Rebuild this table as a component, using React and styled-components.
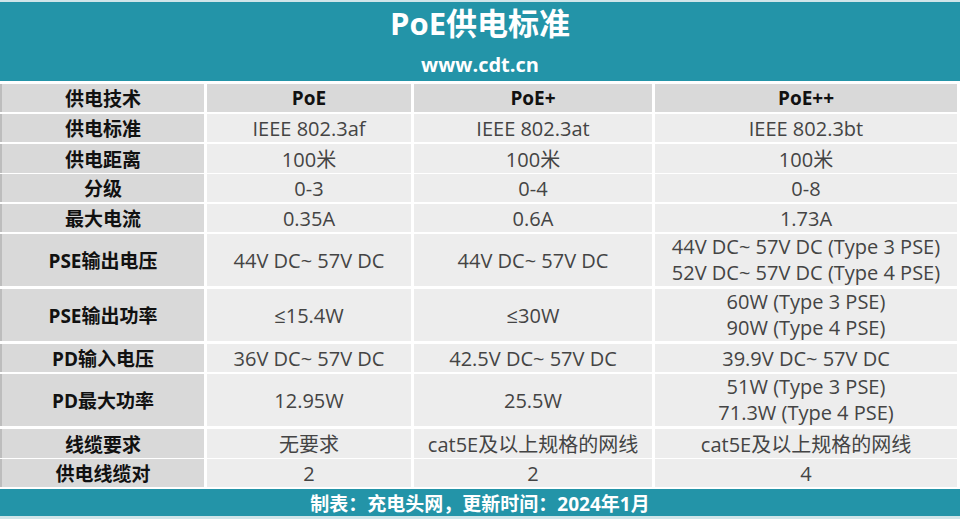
import React from "react";
import styled, { createGlobalStyle } from "styled-components";

const rows = [
  ["供电标准", "IEEE 802.3af", "IEEE 802.3at", "IEEE 802.3bt"],
  ["供电距离", "100米", "100米", "100米"],
  ["分级", "0-3", "0-4", "0-8"],
  ["最大电流", "0.35A", "0.6A", "1.73A"],
  [
    "PSE输出电压",
    "44V DC~ 57V DC",
    "44V DC~ 57V DC",
    ["44V DC~ 57V DC (Type 3 PSE)", "52V DC~ 57V DC (Type 4 PSE)"],
  ],
  ["PSE输出功率", "≤15.4W", "≤30W", ["60W (Type 3 PSE)", "90W (Type 4 PSE)"]],
  ["PD输入电压", "36V DC~ 57V DC", "42.5V DC~ 57V DC", "39.9V DC~ 57V DC"],
  ["PD最大功率", "12.95W", "25.5W", ["51W (Type 3 PSE)", "71.3W (Type 4 PSE)"]],
  ["线缆要求", "无要求", "cat5E及以上规格的网线", "cat5E及以上规格的网线"],
  ["供电线缆对", "2", "2", "4"],
];

const App = () => {
  return (
    <>
      <GlobalStyle />
      <Page>
        <Banner>
          <Title>PoE供电标准</Title>
          <Site>www.cdt.cn</Site>
        </Banner>
        <Table>
          <Row>
            <Head>供电技术</Head>
            <Head>PoE</Head>
            <Head>PoE+</Head>
            <Head>PoE++</Head>
          </Row>
          {rows.map(([label, ...cells]) => {
            const tall = cells.some((c) => Array.isArray(c));
            return (
              <Row key={label} $tall={tall}>
                <Head>{label}</Head>
                {cells.map((c, i) => (
                  <Cell key={i}>
                    {Array.isArray(c)
                      ? c.map((line) => <Line key={line}>{line}</Line>)
                      : c}
                  </Cell>
                ))}
              </Row>
            );
          })}
        </Table>
        <Footer>制表：充电头网，更新时间：2024年1月</Footer>
      </Page>
    </>
  );
};

export default App;

const GlobalStyle = createGlobalStyle`
  body {
    margin: 0;
    background: #ffffff;
    font-family: "Open Sans", "Noto Sans CJK SC", sans-serif;
  }
`;

const Page = styled.div`
  width: 960px;
  height: 519px;
  display: flex;
  flex-direction: column;
  gap: 3px;
  background: #ffffff;
  border-bottom: 3px solid #cfe5e9;
  box-sizing: border-box;
`;

const Banner = styled.div`
  height: 81px;
  box-sizing: border-box;
  border-top: 2px solid #cfe5e9;
  background: #2394a8;
  color: #ffffff;
  display: flex;
  flex-direction: column;
  align-items: center;
  font-weight: 700;
`;

const Title = styled.div`
  font-size: 31px;
  line-height: 40px;
  margin-top: 1px;
`;

const Site = styled.div`
  font-size: 20px;
  line-height: 24px;
  margin-top: 10px;
`;

const Table = styled.div`
  display: flex;
  flex-direction: column;
  gap: 3px;
`;

const Row = styled.div`
  display: grid;
  grid-template-columns: 204px 204px 238px 302px;
  column-gap: 3px;
  height: ${({ $tall }) => ($tall ? "52px" : "27px")};
`;

const Head = styled.div`
  background: #d9d9d9;
  display: flex;
  align-items: center;
  justify-content: center;
  font-size: 19px;
  font-weight: 700;
  color: #111111;
  &:first-child {
    border-left: 2px solid #bdbdbd;
  }
`;

const Cell = styled.div`
  background: #ededed;
  display: flex;
  flex-direction: column;
  align-items: center;
  justify-content: center;
  font-size: 20px;
  color: #444444;
`;

const Line = styled.div`
  line-height: 26px;
`;

const Footer = styled.div`
  height: 27px;
  background: #2394a8;
  color: #ffffff;
  font-size: 19px;
  font-weight: 700;
  display: flex;
  align-items: center;
  justify-content: center;
`;
